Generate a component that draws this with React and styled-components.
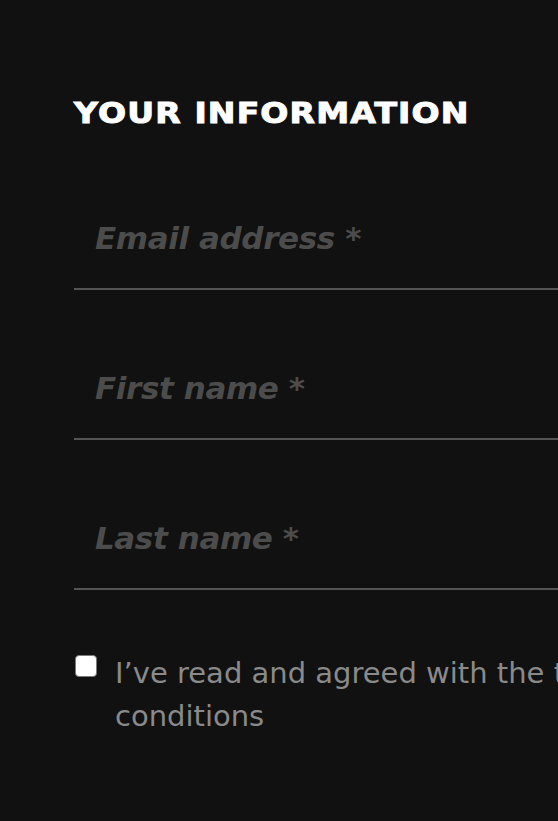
import React from 'react'
import styled, { createGlobalStyle } from 'styled-components'

const Global = createGlobalStyle`
  html, body {
    margin: 0;
    padding: 0;
    background: #111111;
    overflow: hidden;
  }
  body {
    font-family: "DejaVu Sans", "Liberation Sans", sans-serif;
  }
`

const Page = styled.div`
  width: 720px;
  min-height: 821px;
  box-sizing: border-box;
  padding: 94px 0 0 74px;
  background: #111111;
`

const Heading = styled.h2`
  margin: 0 0 56px;
  color: #ffffff;
  font-family: "DejaVu Sans", sans-serif;
  font-weight: 800;
  font-size: 29px;
  line-height: 38px;
  letter-spacing: 1px;
  text-transform: uppercase;
  -webkit-text-stroke: 1px #ffffff;
  transform: scaleX(1.14);
  transform-origin: left center;
`

const Field = styled.label`
  display: flex;
  align-items: center;
  height: 102px;
  margin-bottom: 48px;
  padding-left: 21px;
  border-bottom: 2px solid #545454;
  box-sizing: border-box;
`

const Input = styled.input`
  flex: 1;
  background: transparent;
  border: 0;
  outline: none;
  color: #ffffff;
  padding: 0;
  font-family: "DejaVu Sans", sans-serif;
  font-weight: 700;
  font-style: italic;
  font-size: 31px;
  letter-spacing: -0.4px;
  &::placeholder {
    color: #4c4c4c;
  }
`

const Agree = styled.label`
  display: flex;
  align-items: flex-start;
  gap: 18px;
  margin-top: 54px;
  color: #8a8a8a;
  font-family: "DejaVu Sans", sans-serif;
  font-weight: 400;
  font-size: 29px;
  line-height: 43px;
`

const Box = styled.span`
  flex: none;
  width: 20px;
  height: 20px;
  margin-top: 11px;
  margin-left: 1px;
  background: #ffffff;
  border: 1px solid #7a7a7a;
  border-radius: 4px;
`

const AgreeText = styled.span`
  width: 620px;
  padding-top: 8px;
`

export default function App() {
  return (
    <>
      <Global />
      <Page>
        <Heading>Your information</Heading>
        <Field><Input placeholder="Email address *" /></Field>
        <Field><Input placeholder="First name *" /></Field>
        <Field><Input placeholder="Last name *" /></Field>
        <Agree>
          <Box />
          <AgreeText>I’ve read and agreed with the terms and conditions</AgreeText>
        </Agree>
      </Page>
    </>
  )
}
